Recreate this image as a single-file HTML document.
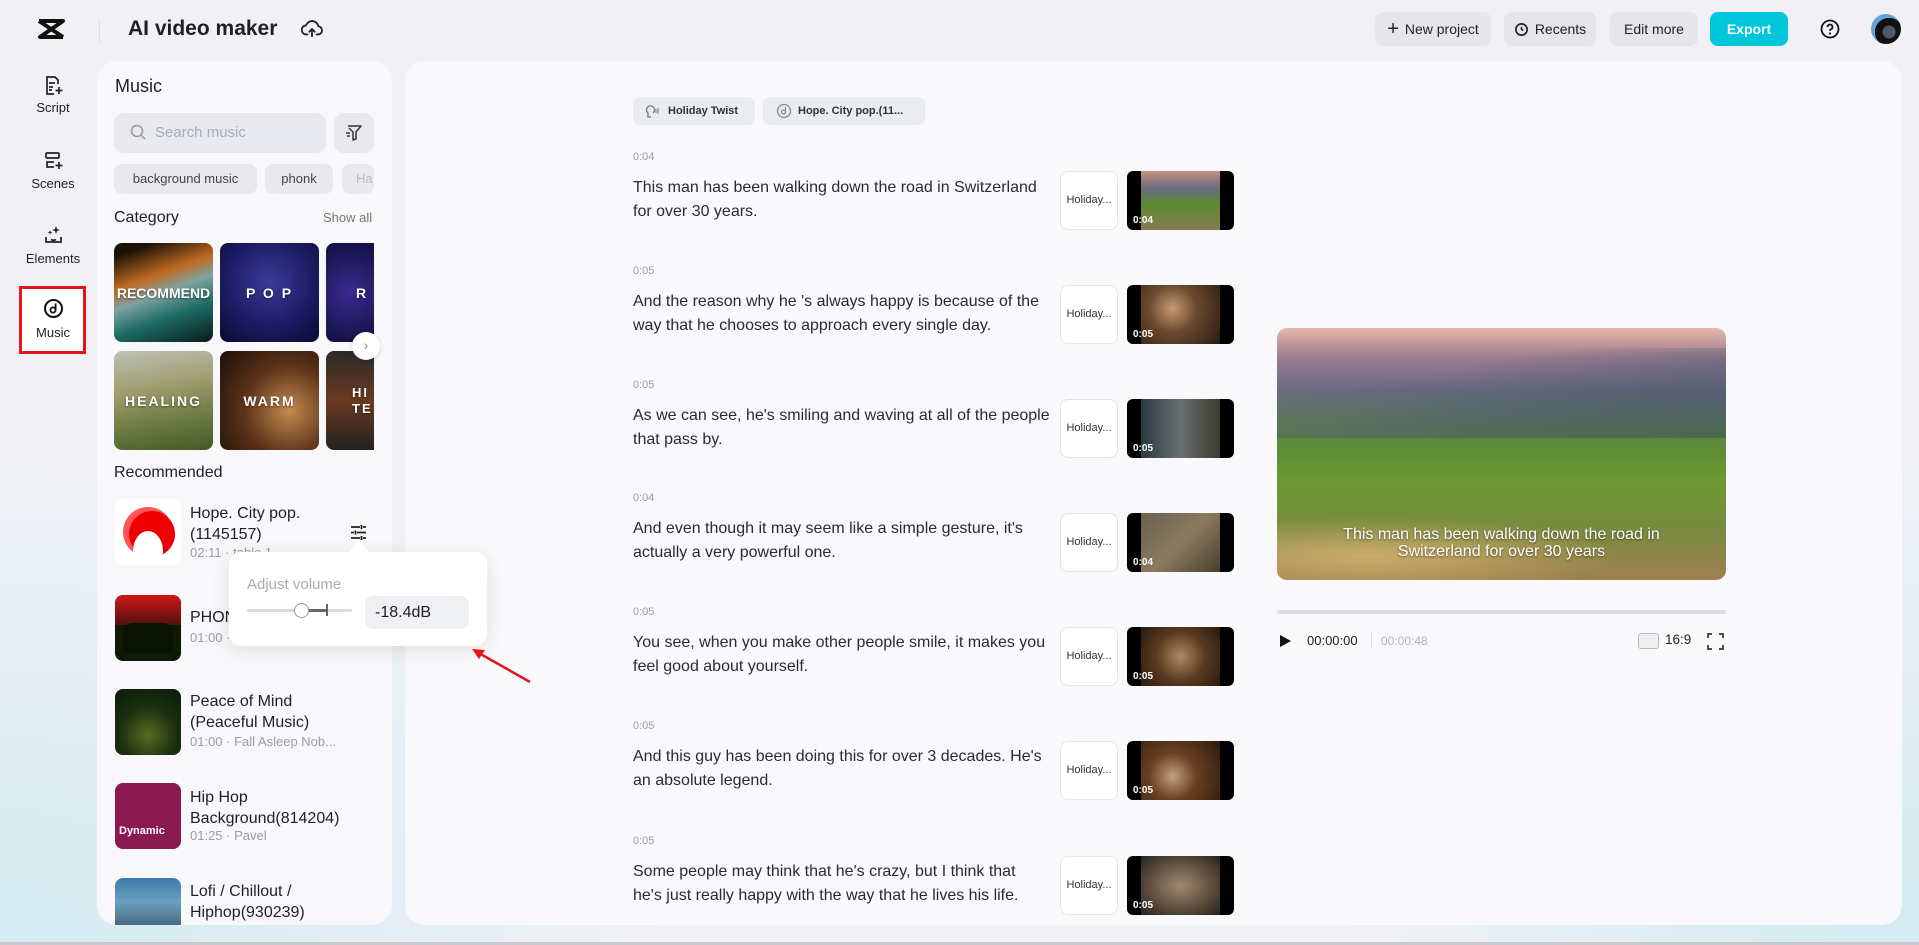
<!DOCTYPE html>
<html><head><meta charset="utf-8"><style>
*{box-sizing:border-box;margin:0;padding:0}
body{width:1919px;height:945px;overflow:hidden;font-family:"Liberation Sans",sans-serif;color:#1f1f24;position:relative;
background:radial-gradient(ellipse 700px 500px at 0% 100%,#d3ebf2,rgba(211,235,242,0) 100%),radial-gradient(ellipse 600px 500px at 100% 100%,#d3ebf2,rgba(211,235,242,0) 100%),#f1f1f5;}
.a{position:absolute}
.btn{position:absolute;top:12px;height:34px;border-radius:8px;background:#e4e6ec;font-size:14px;display:flex;align-items:center;justify-content:center;gap:6px;color:#222}
.nav{position:absolute;left:0;width:106px;text-align:center;font-size:13px;color:#222}
.panel{position:absolute;background:#f8f8fb;border-radius:20px}
.tag{position:absolute;top:164px;height:30px;border-radius:8px;background:#e7e9ee;font-size:13px;color:#444;line-height:30px;text-align:center}
.cat{position:absolute;width:99px;height:99px;border-radius:8px;color:#fff;font-weight:bold;font-size:14px;letter-spacing:2px;display:flex;align-items:center;justify-content:center;overflow:hidden;text-shadow:0 1px 2px rgba(0,0,0,.5)}
.th{position:absolute;left:115px;width:66px;height:66px;border-radius:8px;overflow:hidden}
.tt{position:absolute;left:190px;font-size:16px;line-height:21px;color:#1f1f24;width:160px}
.mt{position:absolute;left:190px;font-size:13px;color:#9a9ca3}
.ts{position:absolute;left:633px;font-size:11px;color:#9a9ca3}
.tx{position:absolute;left:633px;font-size:16px;line-height:24px;color:#2a2a30;white-space:nowrap}
.hb{position:absolute;left:1060px;width:58px;height:59px;border:1px solid #e3e4e8;border-radius:8px;background:#fff;font-size:11px;color:#333;line-height:57px;text-align:center}
.vt{position:absolute;left:1127px;width:107px;height:59px;border-radius:6px;background:#000;overflow:hidden}
.vt i{position:absolute;left:14px;right:14px;top:0;bottom:0}
.vt b{position:absolute;left:6px;bottom:4px;color:#fff;font-size:10px}
</style></head><body>
<div class="a" style="left:0;top:942px;width:1919px;height:3px;background:#c9c9cc"></div>
<svg class="a" style="left:37px;top:18px" width="28" height="22" viewBox="0 0 28 22"><path d="M2 3h24L3 19h23" fill="none" stroke="#111" stroke-width="4" stroke-linejoin="round"/><path d="M2 3l24 16" stroke="#111" stroke-width="4"/></svg>
<div class="a" style="left:99px;top:20px;width:1px;height:22px;background:#ddd"></div>
<div class="a" style="left:128px;top:17px;font-size:21px;font-weight:bold">AI video maker</div>
<svg class="a" style="left:301px;top:19px" width="22" height="20" viewBox="0 0 24 22"><path d="M7 17H6a5 5 0 0 1-.5-10A7 7 0 0 1 19 8a4.5 4.5 0 0 1-1 9h-1M12 19v-8M9 14l3-3 3 3" fill="none" stroke="#222" stroke-width="2" stroke-linecap="round" stroke-linejoin="round"/></svg>
<div class="btn" style="left:1375px;width:116px"><span style="font-size:20px;font-weight:300">+</span>New project</div>
<div class="btn" style="left:1504px;width:92px"><svg width="15" height="15" viewBox="0 0 16 16"><circle cx="8" cy="8" r="6" fill="none" stroke="#222" stroke-width="1.8"/><path d="M8 5v3l2 1" stroke="#222" stroke-width="1.6" fill="none"/></svg>Recents</div>
<div class="btn" style="left:1610px;width:88px">Edit more</div>
<div class="btn" style="left:1710px;width:78px;background:#00c6dc;color:#fff;font-weight:bold">Export</div>
<svg class="a" style="left:1820px;top:19px" width="20" height="20" viewBox="0 0 20 20"><circle cx="10" cy="10" r="8.5" fill="none" stroke="#111" stroke-width="1.8"/><path d="M7.5 8a2.5 2.5 0 1 1 3.5 2.3c-.7.3-1 .8-1 1.5" fill="none" stroke="#111" stroke-width="1.8"/><circle cx="10" cy="14.5" r="1.1" fill="#111"/></svg>
<div class="a" style="left:1871px;top:14px;width:30px;height:30px;border-radius:50%;background:radial-gradient(circle at 60% 60%,#4a5a66 0 25%,#111 26% 55%,#6aa0d8 56%);"></div>
<svg class="a" style="left:44px;top:76px" width="20" height="20" viewBox="0 0 20 20"><path d="M14 8V4l-3-3H3v17h7M5 7h6M5 11h4M5 14h3M15 11v7M11.5 14.5h7" fill="none" stroke="#222" stroke-width="1.7"/></svg>
<div class="nav" style="top:100px">Script</div>
<svg class="a" style="left:44px;top:151px" width="20" height="20" viewBox="0 0 20 20"><rect x="2" y="2" width="13" height="5" rx="1" fill="none" stroke="#222" stroke-width="1.7"/><path d="M10 11H3v5h7M15 11v7M11.5 14.5h7" fill="none" stroke="#222" stroke-width="1.7"/></svg>
<div class="nav" style="top:176px">Scenes</div>
<svg class="a" style="left:44px;top:225px" width="20" height="20" viewBox="0 0 20 20"><path d="M2 12v5h15v-5M7 14.5q2.5 1.5 5 0" fill="none" stroke="#222" stroke-width="1.7"/><path d="M12 1l1 3 3 1-3 1-1 3-1-3-3-1 3-1zM6 5l.6 1.8 1.8.6-1.8.6L6 9.8l-.6-1.8-1.8-.6 1.8-.6z" fill="#222"/></svg>
<div class="nav" style="top:251px">Elements</div>
<div class="a" style="left:19px;top:286px;width:67px;height:68px;border:3px solid #e3141b;background:#fff"></div>
<svg class="a" style="left:43px;top:298px" width="21" height="21" viewBox="0 0 21 21"><circle cx="10.5" cy="10.5" r="8.5" fill="none" stroke="#111" stroke-width="2"/><circle cx="10" cy="12" r="2.6" fill="none" stroke="#111" stroke-width="1.8"/><path d="M12.6 12V5.5" stroke="#111" stroke-width="1.8"/></svg>
<div class="nav" style="top:325px;font-size:13px">Music</div>
<div class="panel" style="left:97px;top:61px;width:295px;height:864px;overflow:hidden"></div>
<div class="a" style="left:115px;top:76px;font-size:18px">Music</div>
<div class="a" style="left:114px;top:113px;width:212px;height:40px;border-radius:10px;background:#e7e9ee"></div>
<svg class="a" style="left:130px;top:124px" width="17" height="17" viewBox="0 0 17 17"><circle cx="7" cy="7" r="5.5" fill="none" stroke="#999" stroke-width="1.5"/><path d="M11 11l4 4" stroke="#999" stroke-width="1.5"/></svg>
<div class="a" style="left:155px;top:124px;font-size:15px;color:#a8abb2">Search music</div>
<div class="a" style="left:334px;top:113px;width:40px;height:40px;border-radius:10px;background:#e7e9ee"></div>
<svg class="a" style="left:345px;top:124px" width="18" height="18" viewBox="0 0 18 18"><path d="M3 2h13l-5 6v7l-3 1V8L4 4" fill="none" stroke="#333" stroke-width="1.5" stroke-linejoin="round"/><path d="M1 9h4M2 12h3" stroke="#333" stroke-width="1.5"/></svg>
<div class="tag" style="left:114px;width:143px">background music</div>
<div class="tag" style="left:265px;width:68px">phonk</div>
<div class="tag" style="left:342px;width:32px;color:#bbb;text-align:left;padding-left:14px;overflow:hidden">Ha</div>
<div class="a" style="left:114px;top:209px;font-size:16px">Category</div>
<div class="a" style="left:323px;top:210px;font-size:13px;color:#777">Show all</div>
<div class="cat" style="left:114px;top:243px;background:linear-gradient(160deg,#1a1208 10%,#c06a20 35%,#7fa3a0 50%,#1d6b64 70%,#0a1a18);letter-spacing:0">RECOMMEND</div>
<div class="cat" style="left:220px;top:243px;background:radial-gradient(circle at 50% 40%,#3a3a9a,#1a1a60 60%,#0a0a30)">P O P</div>
<div class="cat" style="left:326px;top:243px;width:48px;border-radius:8px 0 0 8px;background:radial-gradient(circle,#3a2a90,#101040);justify-content:flex-start;padding-left:30px">R</div>
<div class="cat" style="left:114px;top:351px;background:linear-gradient(170deg,#bfc1b5,#9c9a6a 40%,#6a7a40 70%,#455a28)">HEALING</div>
<div class="cat" style="left:220px;top:351px;background:radial-gradient(circle at 70% 60%,#c48a50,#5a3218 50%,#1a0e08)">WARM</div>
<div class="cat" style="left:326px;top:351px;width:48px;border-radius:8px 0 0 8px;background:linear-gradient(#2a2a2a,#6a3a20 50%,#222);justify-content:flex-start;padding-left:26px;font-size:13px;line-height:16px">HI<br>TE</div>
<div class="a" style="left:352px;top:332px;width:28px;height:28px;border-radius:50%;background:#fff;box-shadow:0 1px 4px rgba(0,0,0,.15);text-align:center;line-height:26px;color:#888;font-size:14px">›</div>
<div class="a" style="left:114px;top:464px;font-size:16px">Recommended</div>
<div class="th" style="top:499px;background:#fff"><div class="a" style="left:8px;top:8px;width:50px;height:50px;border-radius:50%;background:#f55"></div><div class="a" style="left:14px;top:12px;width:46px;height:46px;border-radius:50%;background:#e00"></div><div class="a" style="left:18px;top:32px;width:30px;height:40px;border-radius:50%;background:#fff"></div></div>
<div class="tt" style="top:503px">Hope. City pop.<br>(1145157)</div>
<div class="mt" style="top:545px">02:11 · table 1</div>
<svg class="a" style="left:350px;top:524px" width="17" height="17" viewBox="0 0 17 17"><path d="M1 3h9M13 3h3M1 8.5h3M7 8.5h9M1 14h9M13 14h3M11.5 1v4M5.5 6.5v4M11.5 12v4" stroke="#222" stroke-width="1.8"/></svg>
<div class="th" style="top:595px;background:#0e1a05"><div class="a" style="left:0;top:0;width:66px;height:30px;background:linear-gradient(#d01818,#501010)"></div><div class="a" style="left:8px;top:28px;width:50px;height:30px;background:#0a1400;border-radius:10px 10px 4px 4px"></div></div>
<div class="tt" style="top:607px">PHONK</div>
<div class="mt" style="top:630px">01:00 · </div>
<div class="th" style="top:689px;background:radial-gradient(circle at 50% 70%,#5a6a20,#1a3010 50%,#0a1a08)"></div>
<div class="tt" style="top:691px;width:170px">Peace of Mind<br>(Peaceful Music)</div>
<div class="mt" style="top:734px">01:00 · Fall Asleep Nob...</div>
<div class="th" style="top:783px;background:#8a1a50"><div class="a" style="left:4px;bottom:12px;color:#fff;font-size:11px;font-weight:bold">Dynamic</div></div>
<div class="tt" style="top:787px;width:150px;overflow:hidden;white-space:nowrap">Hip Hop<br>Background(814204)</div>
<div class="mt" style="top:828px">01:25 · Pavel</div>
<div class="th" style="top:878px;height:47px;border-radius:8px 8px 0 0;background:linear-gradient(#3a7aa8,#6aa0c0 50%,#4a6a80)"></div>
<div class="tt" style="top:881px;width:170px">Lofi / Chillout /<br>Hiphop(930239)</div>
<div class="panel" style="left:405px;top:61px;width:1497px;height:864px;background:#f9f9fb"></div>
<div class="a" style="left:633px;top:97px;width:122px;height:28px;border-radius:7px;background:#e9ecf0;font-size:11px;font-weight:bold;line-height:28px;padding-left:35px;color:#333">Holiday Twist</div>
<svg class="a" style="left:644px;top:103px" width="18" height="16" viewBox="0 0 18 16"><path d="M9 10a4 4 0 1 0-5 0v4h3" fill="none" stroke="#777" stroke-width="1.3"/><path d="M12 6v4M14 5v6" stroke="#777" stroke-width="1"/></svg>
<div class="a" style="left:763px;top:97px;width:162px;height:28px;border-radius:7px;background:#e9ecf0;font-size:11px;font-weight:bold;line-height:28px;padding-left:35px;color:#333">Hope. City pop.(11...</div>
<svg class="a" style="left:776px;top:103px" width="16" height="16" viewBox="0 0 16 16"><circle cx="8" cy="8" r="6.5" fill="none" stroke="#888" stroke-width="1.3"/><circle cx="7.5" cy="9" r="2" fill="none" stroke="#888" stroke-width="1.2"/><path d="M9.5 9V4" stroke="#888" stroke-width="1.2"/></svg>

<div class="ts" style="top:151px">0:04</div><div class="tx" style="top:176px">This man has been walking down the road in Switzerland<br>for over 30 years.</div>
<div class="hb" style="top:171px">Holiday...</div><div class="vt" style="top:171px"><i style="background:linear-gradient(#c49080,#6a6a80 30%,#5a8a30 55%,#8a7a50)"></i><b>0:04</b></div>
<div class="ts" style="top:265px">0:05</div><div class="tx" style="top:290px">And the reason why he 's always happy is because of the<br>way that he chooses to approach every single day.</div>
<div class="hb" style="top:285px">Holiday...</div><div class="vt" style="top:285px"><i style="background:radial-gradient(circle at 40% 40%,#c89a70,#6a4a30 40%,#2a1a10)"></i><b>0:05</b></div>
<div class="ts" style="top:379px">0:05</div><div class="tx" style="top:404px">As we can see, he's smiling and waving at all of the people<br>that pass by.</div>
<div class="hb" style="top:399px">Holiday...</div><div class="vt" style="top:399px"><i style="background:linear-gradient(90deg,#2a3a40,#6a7070 50%,#3a3a30)"></i><b>0:05</b></div>
<div class="ts" style="top:492px">0:04</div><div class="tx" style="top:517px">And even though it may seem like a simple gesture, it's<br>actually a very powerful one.</div>
<div class="hb" style="top:513px">Holiday...</div><div class="vt" style="top:513px"><i style="background:linear-gradient(135deg,#6a6050,#8a7a60 50%,#4a4030)"></i><b>0:04</b></div>
<div class="ts" style="top:606px">0:05</div><div class="tx" style="top:631px">You see, when you make other people smile, it makes you<br>feel good about yourself.</div>
<div class="hb" style="top:627px">Holiday...</div><div class="vt" style="top:627px"><i style="background:radial-gradient(circle,#b08a60,#5a3a20 50%,#2a1a10)"></i><b>0:05</b></div>
<div class="ts" style="top:720px">0:05</div><div class="tx" style="top:745px">And this guy has been doing this for over 3 decades. He's<br>an absolute legend.</div>
<div class="hb" style="top:741px">Holiday...</div><div class="vt" style="top:741px"><i style="background:radial-gradient(circle at 40% 60%,#c0a080,#6a4020 40%,#2a1a10)"></i><b>0:05</b></div>
<div class="ts" style="top:835px">0:05</div><div class="tx" style="top:860px">Some people may think that he's crazy, but I think that<br>he's just really happy with the way that he lives his life.</div>
<div class="hb" style="top:856px">Holiday...</div><div class="vt" style="top:856px"><i style="background:radial-gradient(ellipse,#a08a70,#5a4a3a 60%,#222)"></i><b>0:05</b></div>
<div class="a" style="left:1277px;top:328px;width:449px;height:252px;border-radius:10px;overflow:hidden;background:linear-gradient(#e8b8a8 0%,#9a7a90 12%,#6a6a80 25%,#5a8a3a 45%,#6a9a30 60%,#7a8a40 80%,#a08050)">
<div class="a" style="left:0;top:20px;width:449px;height:90px;background:linear-gradient(170deg,transparent 30%,#4a5a70 60%,#3a4a5a);opacity:.5"></div>
<div class="a" style="left:0;bottom:0;width:449px;height:80px;background:radial-gradient(ellipse at 20% 70%,rgba(230,190,120,.7),transparent 50%)"></div>
<div class="a" style="left:0;top:198px;width:449px;text-align:center;color:#fff;font-size:16px;line-height:17px;text-shadow:0 1px 2px rgba(0,0,0,.5)">This man has been walking down the road in<br>Switzerland for over 30 years</div>
</div>
<div class="a" style="left:1277px;top:610px;width:449px;height:4px;border-radius:2px;background:#dcdde0"></div>
<svg class="a" style="left:1279px;top:634px" width="13" height="14"><path d="M1 1l11 6-11 6z" fill="#111"/></svg>
<div class="a" style="left:1307px;top:633px;font-size:13px;color:#222">00:00:00</div>
<div class="a" style="left:1371px;top:633px;width:1px;height:15px;background:#ddd"></div>
<div class="a" style="left:1381px;top:634px;font-size:12px;color:#b0b3ba">00:00:48</div>
<div class="a" style="left:1638px;top:633px;width:21px;height:16px;border:1px solid #bbb;border-radius:3px;background:#eceef2"></div>
<div class="a" style="left:1665px;top:632px;font-size:13.5px;color:#222">16:9</div>
<svg class="a" style="left:1707px;top:633px" width="17" height="17" viewBox="0 0 17 17"><path d="M1 5V1h4M12 1h4v4M16 12v4h-4M5 16H1v-4" fill="none" stroke="#333" stroke-width="1.7"/></svg>
<div class="a" style="left:229px;top:552px;width:258px;height:94px;background:#fff;border-radius:12px;box-shadow:0 4px 20px rgba(0,0,0,.1)"></div>
<div class="a" style="left:352px;top:544px;width:14px;height:14px;background:#fff;transform:rotate(45deg)"></div>
<div class="a" style="left:247px;top:576px;font-size:15px;color:#a9abb2">Adjust volume</div>
<div class="a" style="left:247px;top:609px;width:105px;height:3px;background:#d8dbe0;border-radius:2px"></div>
<div class="a" style="left:301px;top:609px;width:26px;height:3px;background:#666"></div>
<div class="a" style="left:326px;top:604px;width:1.5px;height:12px;background:#666"></div>
<div class="a" style="left:294px;top:603px;width:15px;height:15px;border-radius:50%;background:#fff;border:1px solid #999"></div>
<div class="a" style="left:365px;top:596px;width:104px;height:33px;border-radius:8px;background:#eef0f3;font-size:16px;line-height:33px;padding-left:10px">-18.4dB</div>
<svg class="a" style="left:460px;top:638px" width="80" height="50"><path d="M70 44L17 14" stroke="#e3141b" stroke-width="2.5"/><path d="M12 11l13 1-6 9z" fill="#e3141b"/></svg>
</body></html>
